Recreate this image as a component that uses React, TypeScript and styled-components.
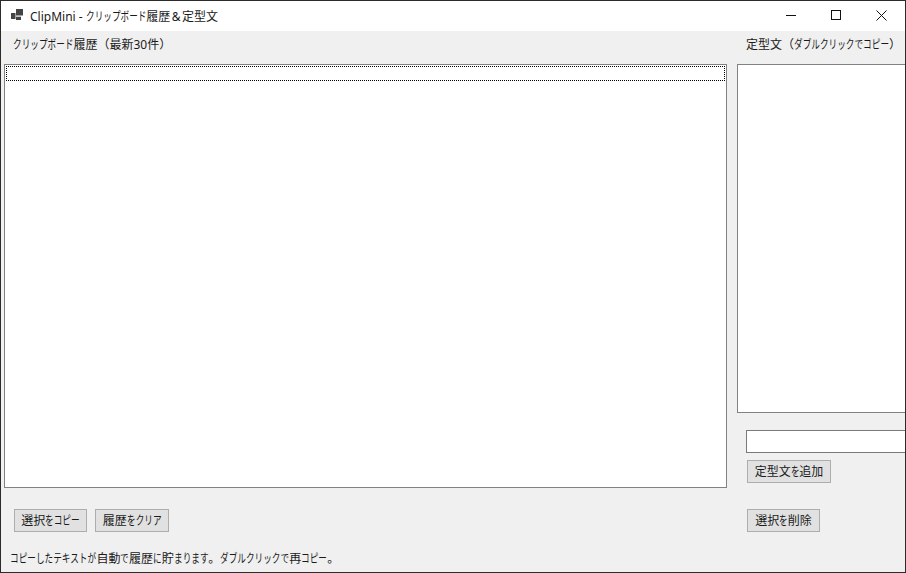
import React from "react";
import styled, { createGlobalStyle } from "styled-components";

const Global = createGlobalStyle`
  html, body { margin: 0; padding: 0; background: #f0f0f0; overflow: hidden; }
  * { box-sizing: border-box; }
`;

const Win = styled.div`
  width: 906px;
  height: 573px;
  display: flex;
  flex-direction: column;
  overflow: hidden;
  background: #f0f0f0;
  border: 1px solid #2b2b2b;
  font-family: "Noto Sans", "Noto Sans CJK JP", "Liberation Sans", sans-serif;
  font-size: 12px;
  color: #1a1a1a;
`;

const TitleBar = styled.div`
  height: 30px;
  flex: none;
  background: #fff;
  display: flex;
  align-items: center;
  padding: 0 1px 0 9px;
`;

const AppIcon = styled.svg`
  width: 16px;
  height: 16px;
  margin-right: 4px;
`;

const Title = styled.div`
  flex: 1;
  white-space: nowrap;
`;

const Amp = styled.span`
  margin: 0 1.5px;
`;

const Caption = styled.button`
  width: 45px;
  height: 30px;
  padding: 0 0 2px;
  border: 0;
  background: none;
  display: flex;
  align-items: center;
  justify-content: center;
`;

const Body = styled.div`
  flex: 1;
  display: grid;
  grid-template-columns: 736px 1fr;
  min-height: 0;
`;

const Column = styled.div`
  display: flex;
  flex-direction: column;
  min-width: 0;
`;

const Label = styled.div<{ $left: number }>`
  height: 33px;
  flex: none;
  padding: 5px 0 0 ${(p) => p.$left}px;
  line-height: 18px;
  white-space: nowrap;
`;

const ListBox = styled.div<{ $h: number; $w: number; $ml: number }>`
  height: ${(p) => p.$h}px;
  width: ${(p) => p.$w}px;
  margin-left: ${(p) => p.$ml}px;
  flex: none;
  background: #fff;
  border: 1px solid #828282;
  padding: 1px;
`;

const FocusRow = styled.div`
  height: 15px;
  border: 1px dotted #000;
`;

const Btn = styled.button<{ $w: number }>`
  width: ${(p) => p.$w}px;
  height: 23px;
  padding: 0 0 2px;
  background: #e1e1e1;
  border: 1px solid #adadad;
  font: inherit;
  color: #1a1a1a;
  white-space: nowrap;
`;

const BtnRow = styled.div`
  display: flex;
  gap: 8px;
  padding: 21px 0 0 13px;
`;

const Status = styled.div`
  margin-top: 18px;
  padding-left: 9px;
  line-height: 18px;
  white-space: nowrap;
`;

const Input = styled.input`
  display: block;
  width: 180px;
  height: 23px;
  margin: 17px 0 0 9px;
  border: 1px solid #7a7a7a;
  background: #fff;
  outline: none;
  flex: none;
`;

const SideBtn = styled.div`
  padding: 7px 0 0 10px;
`;

const SideBtn2 = styled.div`
  padding: 26px 0 0 10px;
`;

const Kana = styled.span<{ $n: number }>`
  display: inline-block;
  width: ${(p) => p.$n * 8.64}px;
  white-space: nowrap;
  transform: scaleX(0.72);
  transform-origin: left center;
`;

const Ui = ({ t }: { t: string }) => (
  <>
    {t.split(/([\u3040-\u30ff]+)/).map((part, i) =>
      i % 2 ? <Kana key={i} $n={part.length}>{part}</Kana> : part
    )}
  </>
);

export default function App() {
  return (
    <Win>
      <Global />
      <TitleBar>
        <AppIcon viewBox="0 0 16 16">
          <rect x="1" y="5" width="4.5" height="6" fill="#444" />
          <rect x="6" y="1" width="7" height="6.5" fill="#444" />
          <rect x="6" y="8.7" width="5" height="3.3" fill="#444" />
        </AppIcon>
        <Title>
          <Ui t="ClipMini - クリップボード履歴" />
          <Amp>&amp;</Amp>
          <Ui t="定型文" />
        </Title>
        <Caption>
          <svg width="11" height="10" viewBox="0 0 11 10"><path d="M0 5.5H10" stroke="#111" /></svg>
        </Caption>
        <Caption>
          <svg width="11" height="10" viewBox="0 0 11 10"><rect x="0.5" y="0.5" width="9" height="9" fill="none" stroke="#111" /></svg>
        </Caption>
        <Caption>
          <svg width="11" height="11" viewBox="0 0 11 11"><path d="M0.5 0.5L10.5 10.5M10.5 0.5L0.5 10.5" stroke="#111" /></svg>
        </Caption>
      </TitleBar>
      <Body>
        <Column>
          <Label $left={12}><Ui t="クリップボード履歴（最新30件）" /></Label>
          <ListBox $h={424} $w={723} $ml={3}>
            <FocusRow />
          </ListBox>
          <BtnRow>
            <Btn $w={73}><Ui t="選択をコピー" /></Btn>
            <Btn $w={74}><Ui t="履歴をクリア" /></Btn>
          </BtnRow>
          <Status><Ui t="コピーしたテキストが自動で履歴に貯まります。ダブルクリックで再コピー。" /></Status>
        </Column>
        <Column>
          <Label $left={9}><Ui t="定型文（ダブルクリックでコピー）" /></Label>
          <ListBox $h={349} $w={180} $ml={0} />
          <Input />
          <SideBtn><Btn $w={84}><Ui t="定型文を追加" /></Btn></SideBtn>
          <SideBtn2><Btn $w={73}><Ui t="選択を削除" /></Btn></SideBtn2>
        </Column>
      </Body>
    </Win>
  );
}
